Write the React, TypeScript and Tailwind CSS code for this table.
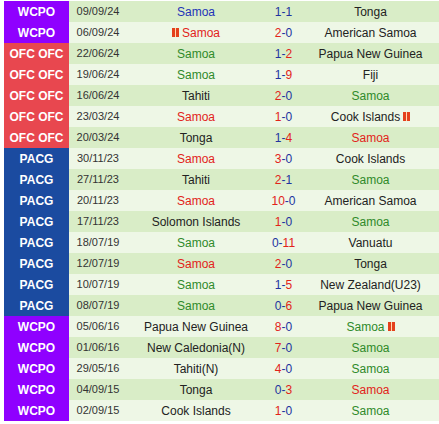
import React from 'react';

type Res = 'w' | 'l' | 'd';

interface Match {
  comp: 'WCPO' | 'OFC' | 'PACG';
  date: string;
  home: string;
  away: string;
  hs: string;
  as: string;
  samoa: 'home' | 'away';
  card?: 'home' | 'away';
}

const matches: Match[] = [
  { comp: 'WCPO', date: '09/09/24', home: 'Samoa', hs: '1', as: '1', away: 'Tonga', samoa: 'home' },
  { comp: 'WCPO', date: '06/09/24', home: 'Samoa', hs: '2', as: '0', away: 'American Samoa', samoa: 'home', card: 'home' },
  { comp: 'OFC', date: '22/06/24', home: 'Samoa', hs: '1', as: '2', away: 'Papua New Guinea', samoa: 'home' },
  { comp: 'OFC', date: '19/06/24', home: 'Samoa', hs: '1', as: '9', away: 'Fiji', samoa: 'home' },
  { comp: 'OFC', date: '16/06/24', home: 'Tahiti', hs: '2', as: '0', away: 'Samoa', samoa: 'away' },
  { comp: 'OFC', date: '23/03/24', home: 'Samoa', hs: '1', as: '0', away: 'Cook Islands', samoa: 'home', card: 'away' },
  { comp: 'OFC', date: '20/03/24', home: 'Tonga', hs: '1', as: '4', away: 'Samoa', samoa: 'away' },
  { comp: 'PACG', date: '30/11/23', home: 'Samoa', hs: '3', as: '0', away: 'Cook Islands', samoa: 'home' },
  { comp: 'PACG', date: '27/11/23', home: 'Tahiti', hs: '2', as: '1', away: 'Samoa', samoa: 'away' },
  { comp: 'PACG', date: '20/11/23', home: 'Samoa', hs: '10', as: '0', away: 'American Samoa', samoa: 'home' },
  { comp: 'PACG', date: '17/11/23', home: 'Solomon Islands', hs: '1', as: '0', away: 'Samoa', samoa: 'away' },
  { comp: 'PACG', date: '18/07/19', home: 'Samoa', hs: '0', as: '11', away: 'Vanuatu', samoa: 'home' },
  { comp: 'PACG', date: '12/07/19', home: 'Samoa', hs: '2', as: '0', away: 'Tonga', samoa: 'home' },
  { comp: 'PACG', date: '10/07/19', home: 'Samoa', hs: '1', as: '5', away: 'New Zealand(U23)', samoa: 'home' },
  { comp: 'PACG', date: '08/07/19', home: 'Samoa', hs: '0', as: '6', away: 'Papua New Guinea', samoa: 'home' },
  { comp: 'WCPO', date: '05/06/16', home: 'Papua New Guinea', hs: '8', as: '0', away: 'Samoa', samoa: 'away', card: 'away' },
  { comp: 'WCPO', date: '01/06/16', home: 'New Caledonia(N)', hs: '7', as: '0', away: 'Samoa', samoa: 'away' },
  { comp: 'WCPO', date: '29/05/16', home: 'Tahiti(N)', hs: '4', as: '0', away: 'Samoa', samoa: 'away' },
  { comp: 'WCPO', date: '04/09/15', home: 'Tonga', hs: '0', as: '3', away: 'Samoa', samoa: 'away' },
  { comp: 'WCPO', date: '02/09/15', home: 'Cook Islands', hs: '1', as: '0', away: 'Samoa', samoa: 'away' },
];

const compStyle: Record<Match['comp'], { label: string; cls: string }> = {
  WCPO: { label: 'WCPO', cls: 'bg-[#8f00ff]' },
  OFC: { label: 'OFC OFC', cls: 'bg-[#e8474f]' },
  PACG: { label: 'PACG', cls: 'bg-[#1b4ba0]' },
};

const resColor: Record<Res, string> = {
  w: 'text-[#e2231a]',
  l: 'text-[#2f8a2a]',
  d: 'text-[#2233b8]',
};

function RedCard() {
  return (
    <span className="inline-flex w-[7px] h-[9px] bg-[#e4401c] justify-center mr-[3px]">
      <span className="w-[1px] h-full bg-[#ffd9b0]" />
    </span>
  );
}

function Team({ name, color, card }: { name: string; color: string; card?: boolean }) {
  return (
    <div className={`flex items-center justify-center ${color}`}>
      {card && name === 'Samoa' && <RedCard />}
      <span>{name}</span>
      {card && name !== 'Samoa' && <span className="ml-[3px] flex"><RedCard /></span>}
    </div>
  );
}

export default function App() {
  return (
    <div className="w-[439px] h-[424px] bg-white pt-px pl-1 font-['Liberation_Sans',Arial,sans-serif] text-[12px]">
      {matches.map((m, i) => {
        const h = parseInt(m.hs);
        const a = parseInt(m.as);
        const sh = h > a ? 'w' : h < a ? 'l' : 'd';
        const res: Res = m.samoa === 'home' ? sh : sh === 'w' ? 'l' : sh === 'l' ? 'w' : 'd';
        const c = compStyle[m.comp];
        const card = m.card;
        const cardRight = card === 'away' && m.away !== 'Samoa';
        return (
          <div
            key={i}
            className={`grid grid-cols-[65px_58px_138px_37px_137px] h-[21px] items-center ${
              i % 2 === 0 ? 'bg-[#d9edc7]' : 'bg-[#eef7e6]'
            }`}
          >
            <div className={`h-full flex items-center justify-center text-white font-bold ${c.cls}`}>
              {c.label}
            </div>
            <div className="text-center text-[11px] text-[#333]">{m.date}</div>
            <Team
              name={m.home}
              color={m.samoa === 'home' ? resColor[res] : 'text-[#222]'}
              card={card === 'home'}
            />
            <div className="text-center">
              <span className={h > a ? 'text-[#e2231a]' : 'text-[#2233a0]'}>{m.hs}</span>
              <span className="text-[#2233a0]">-</span>
              <span className={a > h ? 'text-[#e2231a]' : 'text-[#2233a0]'}>{m.as}</span>
            </div>
            <div className={`flex items-center justify-center ${m.samoa === 'away' ? resColor[res] : 'text-[#222]'}`}>
              <span>{m.away}</span>
              {(cardRight || (card === 'away' && m.away === 'Samoa')) && (
                <span className="ml-[3px] flex">
                  <span className="inline-flex w-[7px] h-[9px] bg-[#e4401c] justify-center">
                    <span className="w-[1px] h-full bg-[#ffd9b0]" />
                  </span>
                </span>
              )}
            </div>
          </div>
        );
      })}
    </div>
  );
}
